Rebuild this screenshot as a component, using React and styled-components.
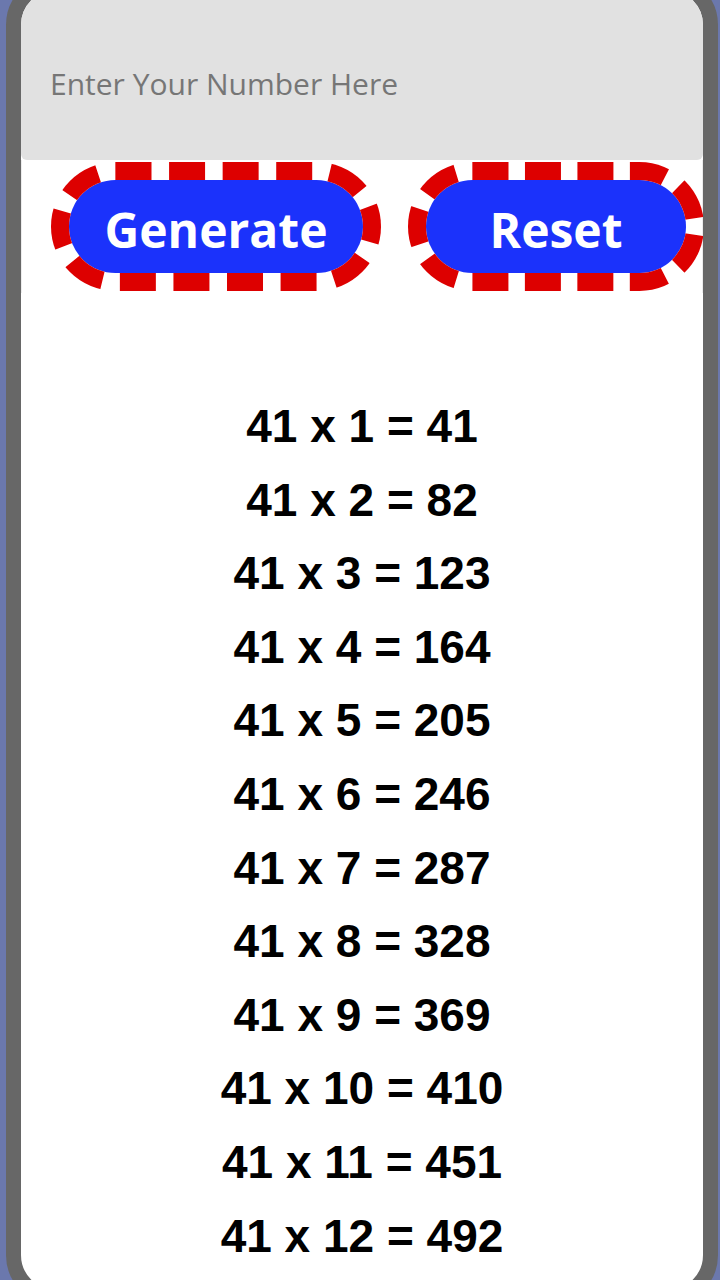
// App.jsx
// Multiplication table generator card.

import React, { useState } from 'react';
import styled, { createGlobalStyle } from 'styled-components';

// Global
//////////////////////////////////////////////////////////////////////

const GlobalStyle = createGlobalStyle`
  html {
    overflow: hidden;
    background: #6b78ad;
  }
  body {
    margin: 0;
    padding: 0;
    background: #6b78ad;
  }
  * { box-sizing: border-box; }
`;

// Styles
//////////////////////////////////////////////////////////////////////

const Page = styled.div`
  padding: 0 2px 0 6px;
`;

const Card = styled.div`
  margin-top: -25px;
  height: 1330px;
  background: #ffffff;
  border: 15px solid #676767;
  border-radius: 50px;
  overflow: hidden;
  display: flex;
  flex-direction: column;
`;

const NumberInput = styled.input`
  display: block;
  width: 100%;
  height: 170px;
  padding: 16px 29px 0;
  border: none;
  border-radius: 0 0 6px 6px;
  background: #e1e1e1;
  font-family: "Open Sans", "Noto Sans", sans-serif;
  font-size: 30px;
  color: #333;
  outline: none;

  &::placeholder {
    color: #767676;
  }
`;

const Controls = styled.div`
  display: flex;
  align-items: center;
  gap: 63px;
  padding: 20px 0 20px 47px;
  border-left: 1px solid #ececec;
  border-right: 1px solid #ececec;
`;

const PillButton = styled.button`
  flex: none;
  width: ${(p) => p.$w}px;
  height: 93px;
  border: none;
  border-radius: 47px;
  background: #1b32fb;
  color: #ffffff;
  font-family: "Open Sans", "Noto Sans", sans-serif;
  font-weight: 700;
  font-size: 48px;
  line-height: 1;
  padding: 6px 0 0;
  outline: 18px dashed #dd0000;
  outline-offset: 0;
  cursor: pointer;
`;

const Table = styled.div`
  margin-top: 97px;
  display: flex;
  flex-direction: column;
  align-items: center;
`;

const Line = styled.div`
  font-family: "Liberation Sans", Arial, sans-serif;
  font-weight: 700;
  font-size: 46px;
  line-height: 73.6px;
  color: #000;
  white-space: pre;
`;

// Component
//////////////////////////////////////////////////////////////////////

const App = () => {
  const [value, setValue] = useState('');
  const [num, setNum] = useState(41);

  const rows = Array.from({ length: 12 }, (_, i) => i + 1);

  return (
    <>
      <GlobalStyle />
      <Page>
        <Card>
          <NumberInput
            type="text"
            placeholder="Enter Your Number Here"
            value={value}
            onChange={(e) => setValue(e.target.value)}
          />
          <Controls>
            <PillButton $w={294} onClick={() => value && setNum(Number(value))}>
              Generate
            </PillButton>
            <PillButton $w={260} onClick={() => { setValue(''); setNum(41); }}>
              Reset
            </PillButton>
          </Controls>
          <Table>
            {rows.map((n) => (
              <Line key={n}>{`${num} x ${n} = ${num * n}`}</Line>
            ))}
          </Table>
        </Card>
      </Page>
    </>
  );
};

export default App;
